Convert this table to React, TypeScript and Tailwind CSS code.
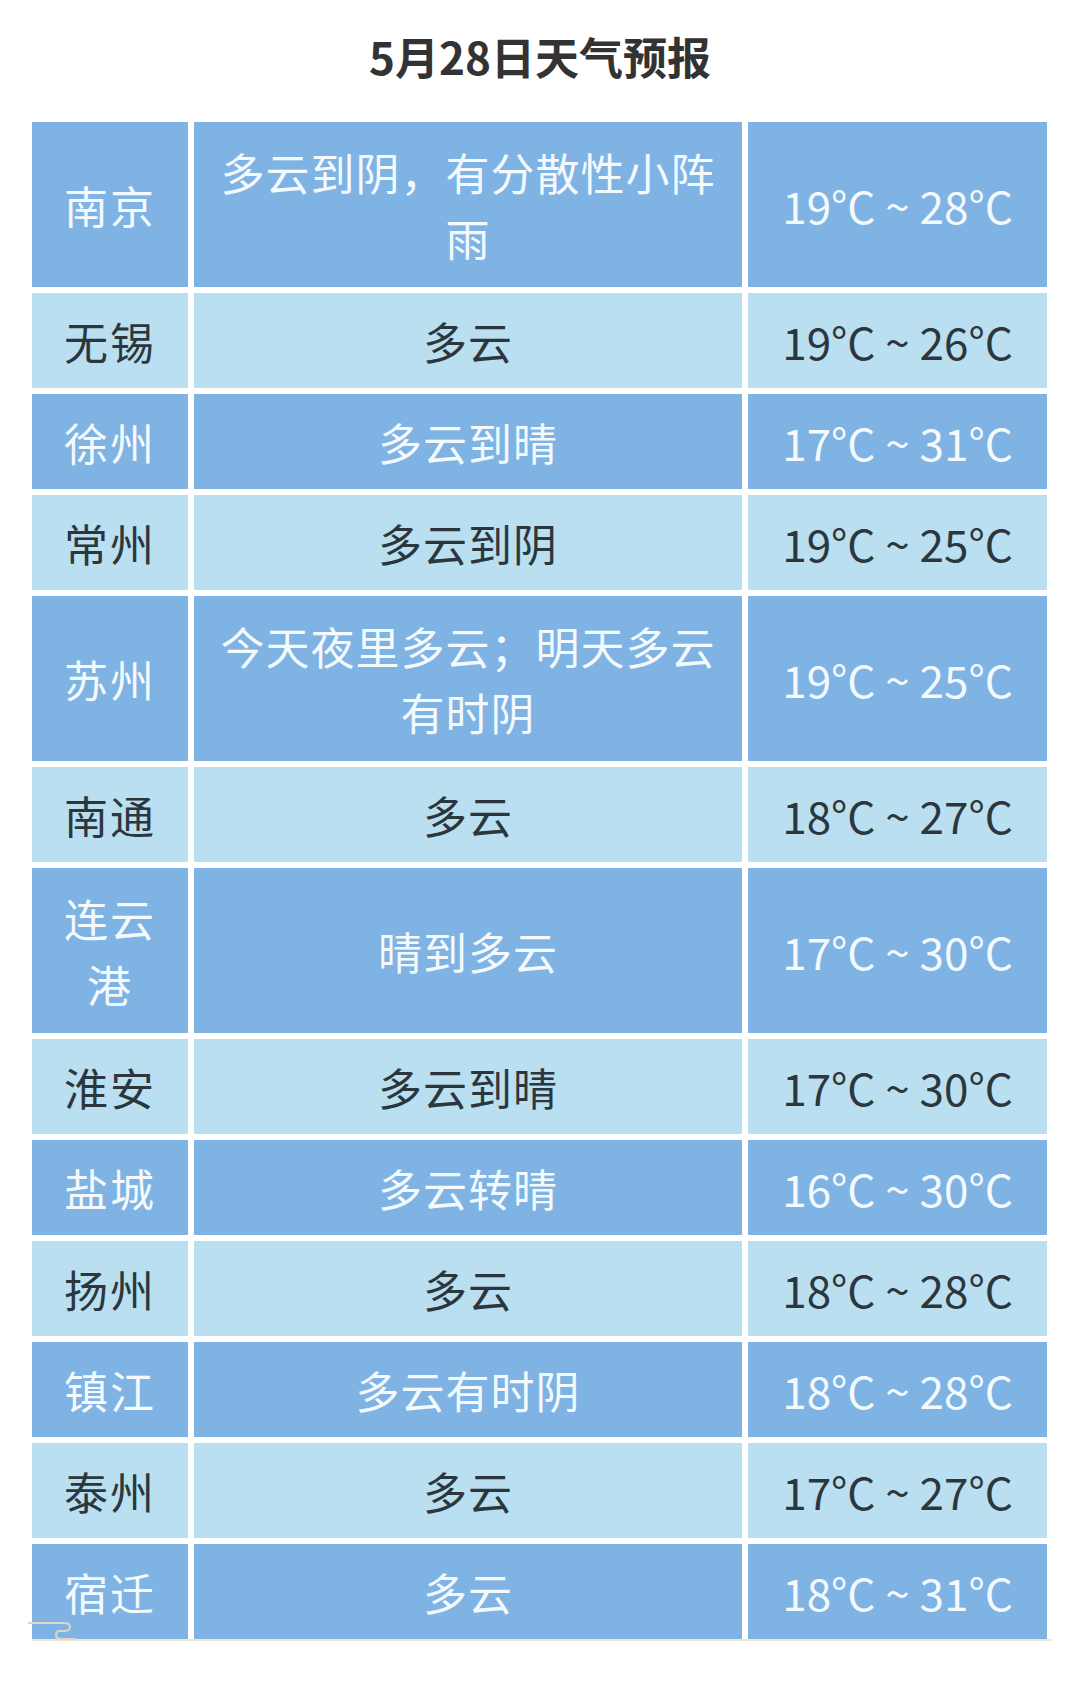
const rows: { city: string; weather: string; temp: string; tall?: boolean }[] = [
  { city: "南京", weather: "多云到阴，有分散性小阵雨", temp: "19°C ~ 28°C", tall: true },
  { city: "无锡", weather: "多云", temp: "19°C ~ 26°C" },
  { city: "徐州", weather: "多云到晴", temp: "17°C ~ 31°C" },
  { city: "常州", weather: "多云到阴", temp: "19°C ~ 25°C" },
  { city: "苏州", weather: "今天夜里多云；明天多云有时阴", temp: "19°C ~ 25°C", tall: true },
  { city: "南通", weather: "多云", temp: "18°C ~ 27°C" },
  { city: "连云港", weather: "晴到多云", temp: "17°C ~ 30°C", tall: true },
  { city: "淮安", weather: "多云到晴", temp: "17°C ~ 30°C" },
  { city: "盐城", weather: "多云转晴", temp: "16°C ~ 30°C" },
  { city: "扬州", weather: "多云", temp: "18°C ~ 28°C" },
  { city: "镇江", weather: "多云有时阴", temp: "18°C ~ 28°C" },
  { city: "泰州", weather: "多云", temp: "17°C ~ 27°C" },
  { city: "宿迁", weather: "多云", temp: "18°C ~ 31°C" },
]

const font = { fontFamily: '"Noto Sans CJK SC", "Noto Sans", sans-serif' }

export default function App() {
  return (
    <div className="w-[1080px] h-[1697px] bg-white" style={font}>
      <div className="h-[122px] pt-[26px] text-center">
        <h1 className="text-[44px] leading-[60px] font-bold text-[#333]">5月28日天气预报</h1>
      </div>

      <div className="relative ml-[32px] w-[1015px]">
        <div className="grid grid-cols-[156px_548px_299px] gap-[6px]">
          {rows.map((r, i) => {
            const dark = i % 2 === 0
            const cell = `${dark ? "bg-[#7eb3e3] text-[#f3f9fd]" : "bg-[#b9dff1] text-[#2c373d]"} ${r.tall ? "h-[165px]" : "h-[95px]"} flex items-center justify-center text-center px-5 text-[44px] leading-[66px]`
            return [
              <div key={`c${i}`} className={`${cell} tracking-[2px]`}>{r.city}</div>,
              <div key={`w${i}`} className={`${cell} tracking-[1px]`}>{r.weather}</div>,
              <div key={`t${i}`} className={cell}>{r.temp}</div>,
            ]
          })}
        </div>
        <div className="h-[2px] w-[1020px] bg-[#f1e6cf]" />
        <svg className="absolute left-[-6px] bottom-0" width="50" height="22" viewBox="0 0 50 22">
          <path d="M2 4 H38 Q44 4 44 8 Q44 12 38 12 H34 Q30 12 30 16 Q30 20 36 20 H50" fill="none" stroke="#ddd6c6" strokeWidth="2" />
        </svg>
      </div>
    </div>
  )
}
